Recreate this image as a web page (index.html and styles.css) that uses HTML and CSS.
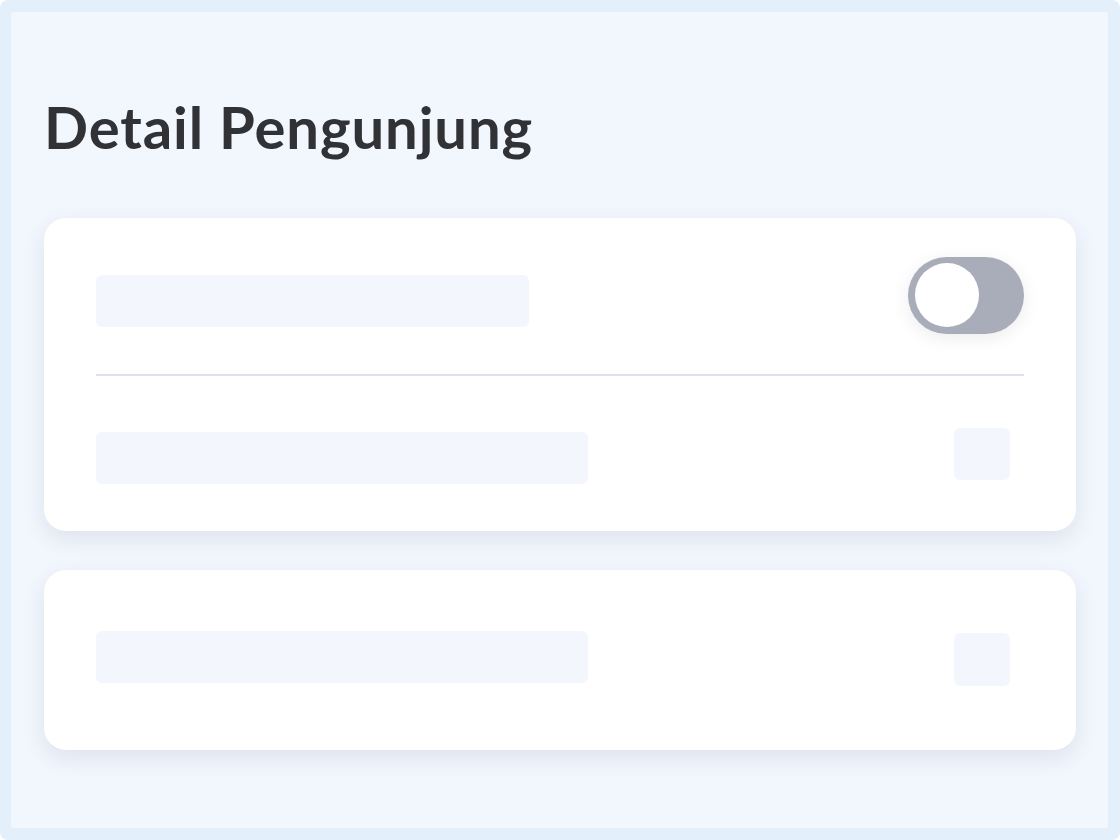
FILE: index.html
```html
<!DOCTYPE html>
<html lang="id">
<head>
    <meta charset="UTF-8">
    <meta name="viewport" content="width=device-width, initial-scale=1.0">
    <title>Detail Pengunjung</title>
    <link rel="stylesheet" href="styles.css">
</head>
<body>
    <div class="frame">
        <div class="panel">
            <h1 class="title">Detail Pengunjung</h1>

            <!-- kartu pertama: toggle + baris isian -->
            <div class="card card-main">
                <div class="row row-toggle">
                    <div class="skeleton bar-short"></div>
                    <div class="toggle"><span class="knob"></span></div>
                </div>
                <div class="divider"></div>
                <div class="row row-field">
                    <div class="skeleton bar-long"></div>
                    <div class="skeleton box"></div>
                </div>
            </div>

            <!-- kartu kedua -->
            <div class="card card-second">
                <div class="row row-field">
                    <div class="skeleton bar-long"></div>
                    <div class="skeleton box box-low"></div>
                </div>
            </div>
        </div>
    </div>
</body>
</html>
```

FILE: styles.css
```css
/* Halaman detail pengunjung */
body {
    margin: 0;
    background-color: #fff;
    font-family: Lato, "Noto Sans", sans-serif;
}

.frame {
    width: 1120px;
    height: 840px;
    box-sizing: border-box;
    padding: 12px 12px 12px 11px;
    background-color: #e4effc;
    border-radius: 8px;
}

.panel {
    height: 100%;
    box-sizing: border-box;
    padding: 86px 32px 0 33px;
    background-color: #f2f6fd;
    border-radius: 3px;
}

.title {
    margin: 0 0 62px 0;
    font-size: 58px;
    line-height: 58px;
    font-weight: 700;
    color: #303236;
    letter-spacing: 0.9px;
}

.card {
    background-color: #fff;
    border-radius: 22px;
    box-shadow: 0 8px 22px rgba(50, 60, 100, 0.1);
    padding: 0 52px;
}

.card-main {
    height: 313px;
    padding-top: 39px;
    box-sizing: border-box;
}

.card-second {
    margin-top: 39px;
    height: 180px;
    padding-top: 61px;
    box-sizing: border-box;
}

.row {
    display: flex;
    justify-content: space-between;
    align-items: flex-start;
}

.skeleton {
    background-color: #f3f6fd;
    border-radius: 6px;
}

.bar-short {
    width: 433px;
    height: 52px;
    margin-top: 18px;
}

.bar-long {
    width: 492px;
    height: 52px;
}

.box {
    width: 56px;
    height: 52px;
    margin-right: 14px;
}

.row-toggle + .divider {
    margin-top: 40px;
}

.divider {
    height: 2px;
    background-color: #dde1ec;
}

.card-main .row-field {
    margin-top: 52px;
}

.card-main .row-field .bar-long {
    margin-top: 4px;
}

.box-low {
    margin-top: 2px;
    height: 53px;
}

.toggle {
    width: 116px;
    height: 77px;
    box-sizing: border-box;
    padding: 6px 7px;
    border-radius: 39px;
    background-color: #a9adb9;
    box-shadow: 0 4px 18px rgba(0, 0, 0, 0.08);
}

.knob {
    display: block;
    width: 64px;
    height: 64px;
    border-radius: 50%;
    background-color: #fff;
}
```
